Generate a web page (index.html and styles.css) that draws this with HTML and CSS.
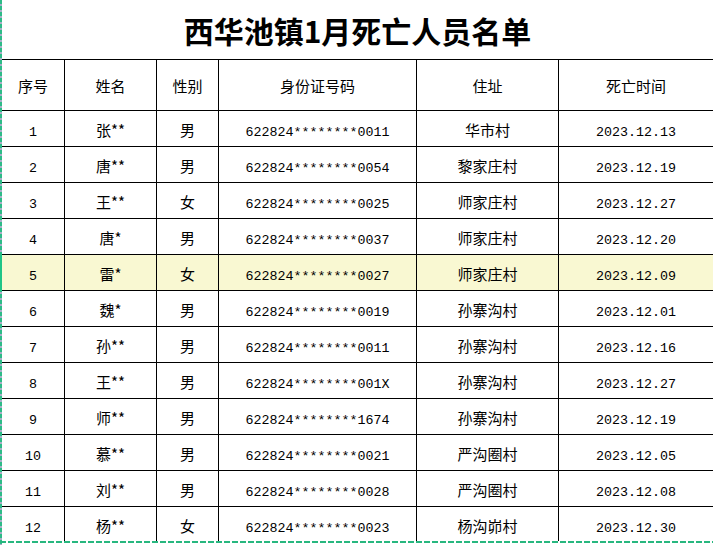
FILE: index.html
```html
<!DOCTYPE html>
<html lang="zh-CN">
<head>
<meta charset="utf-8">
<title>西华池镇1月死亡人员名单</title>
<link rel="stylesheet" href="styles.css">
</head>
<body>
<div class="sheet">
  <div class="title-row"><h1 class="title">西华池镇1月死亡人员名单</h1></div>
  <table class="grid">
    <colgroup>
      <col class="c-no"><col class="c-name"><col class="c-sex"><col class="c-id"><col class="c-addr"><col class="c-date">
    </colgroup>
    <thead>
      <tr><th>序号</th><th>姓名</th><th>性别</th><th>身份证号码</th><th>住址</th><th>死亡时间</th></tr>
    </thead>
    <tbody>
      <tr><td class="num">1</td><td class="cjk">张**</td><td class="cjk">男</td><td class="num">622824********0011</td><td class="cjk">华市村</td><td class="num">2023.12.13</td></tr>
      <tr><td class="num">2</td><td class="cjk">唐**</td><td class="cjk">男</td><td class="num">622824********0054</td><td class="cjk">黎家庄村</td><td class="num">2023.12.19</td></tr>
      <tr><td class="num">3</td><td class="cjk">王**</td><td class="cjk">女</td><td class="num">622824********0025</td><td class="cjk">师家庄村</td><td class="num">2023.12.27</td></tr>
      <tr><td class="num">4</td><td class="cjk">唐*</td><td class="cjk">男</td><td class="num">622824********0037</td><td class="cjk">师家庄村</td><td class="num">2023.12.20</td></tr>
      <tr class="active"><td class="num">5</td><td class="cjk">雷*</td><td class="cjk">女</td><td class="num">622824********0027</td><td class="cjk">师家庄村</td><td class="num">2023.12.09</td></tr>
      <tr><td class="num">6</td><td class="cjk">魏*</td><td class="cjk">男</td><td class="num">622824********0019</td><td class="cjk">孙寨沟村</td><td class="num">2023.12.01</td></tr>
      <tr><td class="num">7</td><td class="cjk">孙**</td><td class="cjk">男</td><td class="num">622824********0011</td><td class="cjk">孙寨沟村</td><td class="num">2023.12.16</td></tr>
      <tr><td class="num">8</td><td class="cjk">王**</td><td class="cjk">男</td><td class="num">622824********001X</td><td class="cjk">孙寨沟村</td><td class="num">2023.12.27</td></tr>
      <tr><td class="num">9</td><td class="cjk">师**</td><td class="cjk">男</td><td class="num">622824********1674</td><td class="cjk">孙寨沟村</td><td class="num">2023.12.19</td></tr>
      <tr><td class="num">10</td><td class="cjk">慕**</td><td class="cjk">男</td><td class="num">622824********0021</td><td class="cjk">严沟圈村</td><td class="num">2023.12.05</td></tr>
      <tr><td class="num">11</td><td class="cjk">刘**</td><td class="cjk">男</td><td class="num">622824********0028</td><td class="cjk">严沟圈村</td><td class="num">2023.12.08</td></tr>
      <tr><td class="num">12</td><td class="cjk">杨**</td><td class="cjk">女</td><td class="num">622824********0023</td><td class="cjk">杨沟峁村</td><td class="num">2023.12.30</td></tr>
    </tbody>
  </table>
  <div class="page-break"></div>
</div>
</body>
</html>
```
FILE: styles.css
```css
html, body {
  margin: 0;
  padding: 0;
  background: #ffffff;
}
body {
  width: 713px;
  height: 545px;
  overflow: hidden;
}
.sheet {
  padding-left: 2px;
  background-image: repeating-linear-gradient(to bottom, #2dbb87 0 4px, #a9aec8 4px 6px);
  background-size: 2px 100%;
  background-repeat: no-repeat;
  height: 545px;
  box-sizing: border-box;
}
.title-row {
  height: 59px;
  display: flex;
  align-items: center;
  justify-content: center;
  background: #fff;
}
.title {
  margin: 0;
  padding-top: 1px;
  font-family: "Noto Sans CJK SC", sans-serif;
  font-weight: 700;
  font-size: 30px;
  line-height: 1;
  color: #000;
}
.grid {
  border-collapse: separate;
  border-spacing: 0;
  table-layout: fixed;
  width: 711px;
  background: #fff;
}
.c-no { width: 62px; }
.c-name { width: 92px; }
.c-sex { width: 62px; }
.c-id { width: 198px; }
.c-addr { width: 142px; }
.c-date { width: 155px; }
.grid th, .grid td {
  padding: 0;
  text-align: center;
  vertical-align: middle;
  color: #000;
  border-bottom: 1px solid #000;
  white-space: nowrap;
  overflow: hidden;
  box-sizing: border-box;
}
.grid th + th, .grid td + td {
  border-left: 1px solid #000;
}
.grid th {
  border-top: 1px solid #000;
  height: 52px;
  padding-top: 1px;
  font-family: "Noto Sans CJK SC", sans-serif;
  font-weight: 400;
  font-size: 15px;
  line-height: 1;
}
.grid td {
  height: 36px;
  line-height: 1;
}
.grid .num {
  padding-top: 8px;
  font-family: "Liberation Mono", monospace;
  font-size: 13.33px;
}
.grid .cjk {
  padding-top: 2px;
  font-family: "Noto Sans CJK SC", sans-serif;
  font-size: 15px;
}
.grid tr.active td {
  background: #f9f8d2;
}
.grid tr.active td:first-child {
  box-shadow: -2px 0 0 #1fc487;
}
.page-break {
  height: 2px;
  margin-top: -2px;
  margin-left: -2px;
  position: relative;
  background-color: #fff;
  background-image: repeating-linear-gradient(to right, #27b77f 0 6px, #ffffff 6px 8px);
}
```
